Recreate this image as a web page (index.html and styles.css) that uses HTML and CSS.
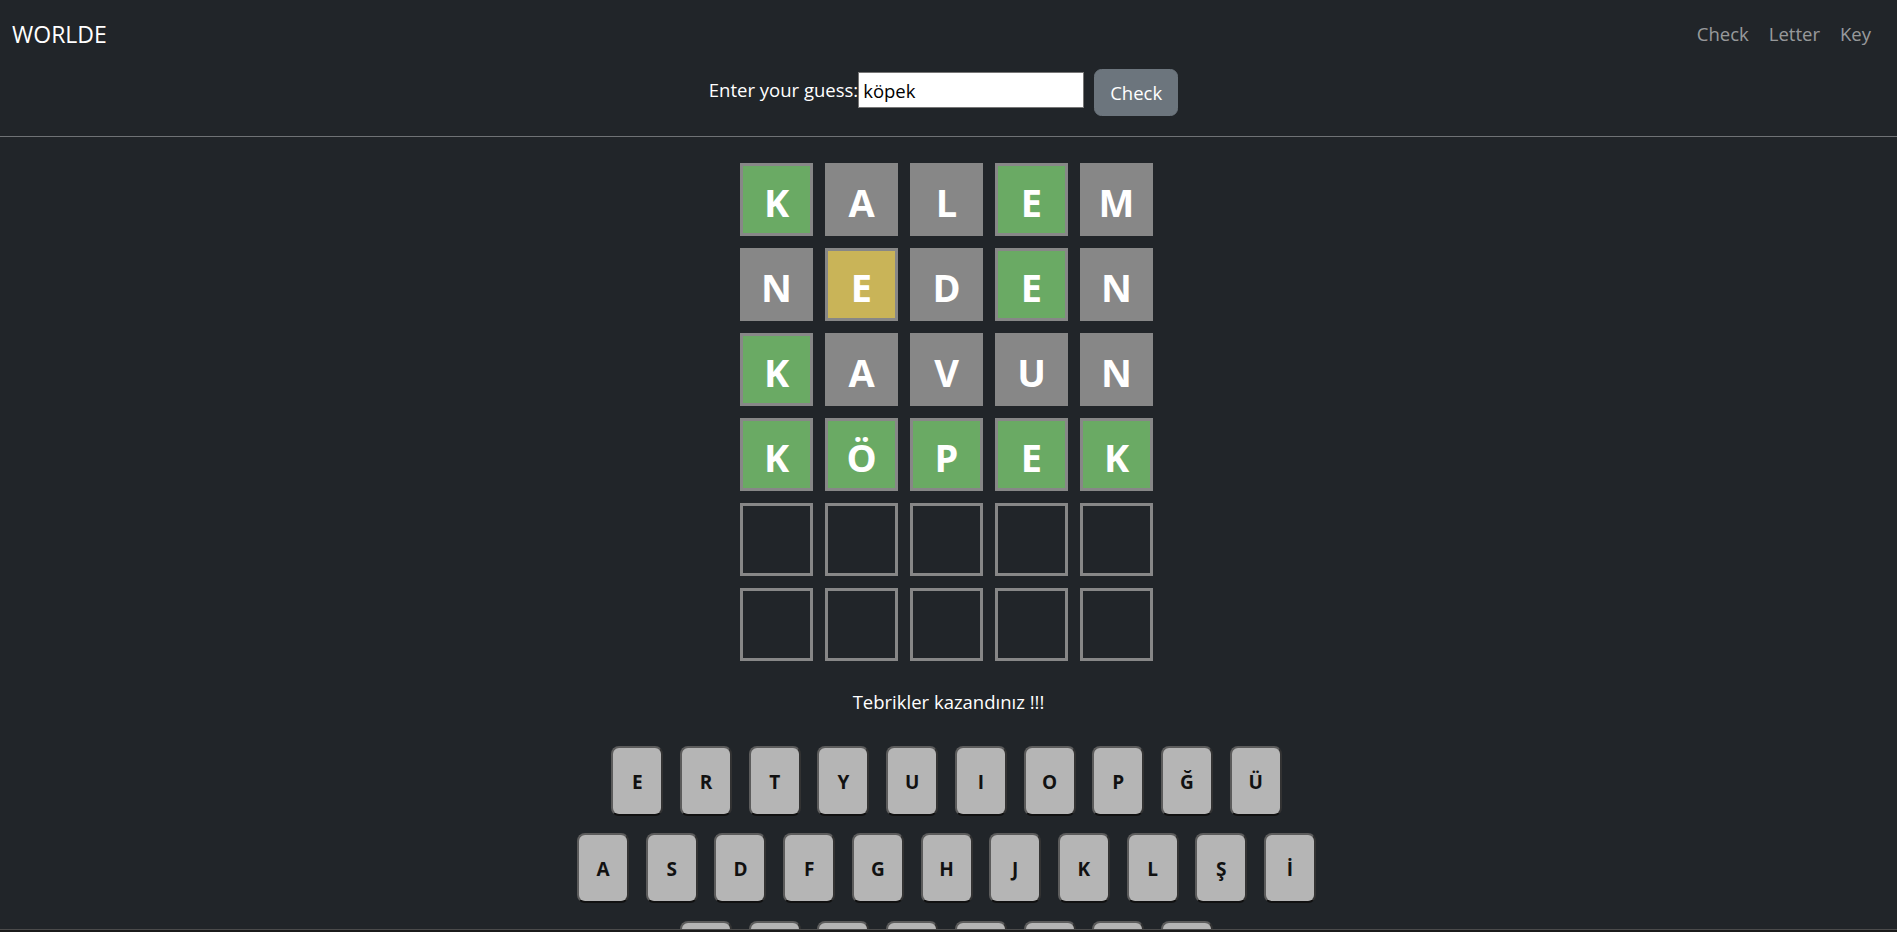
FILE: index.html
```html
<!DOCTYPE html>
<html lang="tr">
<head>
<meta charset="utf-8">
<title>WORLDE</title>
<link rel="stylesheet" href="styles.css">
</head>
<body>
<div class="app">
  <header class="topbar">
    <div class="navrow">
      <a class="brand" href="#">WORLDE</a>
      <nav class="links">
        <a href="#">Check</a>
        <a href="#">Letter</a>
        <a href="#">Key</a>
      </nav>
    </div>
    <form class="guess">
      <label class="guess-label" for="g">Enter your guess:</label><input id="g" class="guess-input" type="text" value="köpek"><button class="btn" type="button">Check</button>
    </form>
  </header>

  <main class="game">
    <div class="board">
      <div class="tile g">K</div><div class="tile x">A</div><div class="tile x">L</div><div class="tile g">E</div><div class="tile x">M</div>
      <div class="tile x">N</div><div class="tile y">E</div><div class="tile x">D</div><div class="tile g">E</div><div class="tile x">N</div>
      <div class="tile g">K</div><div class="tile x">A</div><div class="tile x">V</div><div class="tile x">U</div><div class="tile x">N</div>
      <div class="tile g">K</div><div class="tile g">Ö</div><div class="tile g">P</div><div class="tile g">E</div><div class="tile g">K</div>
      <div class="tile"></div><div class="tile"></div><div class="tile"></div><div class="tile"></div><div class="tile"></div>
      <div class="tile"></div><div class="tile"></div><div class="tile"></div><div class="tile"></div><div class="tile"></div>
    </div>

    <p class="msg">Tebrikler kazandınız !!!</p>

    <div class="keyboard">
      <div class="krow">
        <div class="key">E</div><div class="key">R</div><div class="key">T</div><div class="key">Y</div><div class="key">U</div><div class="key">I</div><div class="key">O</div><div class="key">P</div><div class="key">Ğ</div><div class="key">Ü</div>
      </div>
      <div class="krow">
        <div class="key">A</div><div class="key">S</div><div class="key">D</div><div class="key">F</div><div class="key">G</div><div class="key">H</div><div class="key">J</div><div class="key">K</div><div class="key">L</div><div class="key">Ş</div><div class="key">İ</div>
      </div>
      <div class="krow">
        <div class="key">Z</div><div class="key">C</div><div class="key">V</div><div class="key">B</div><div class="key">N</div><div class="key">M</div><div class="key">Ö</div><div class="key">Ç</div>
      </div>
    </div>
  </main>
  <div class="edge"></div>
</div>
</body>
</html>
```

FILE: styles.css
```css
html, body {
  margin: 0;
  padding: 0;
  background: #212529;
}

.app {
  height: 100vh;
  overflow: hidden;
  background: #212529;
  color: #fff;
  font-family: "Open Sans", "Noto Sans", sans-serif;
  font-size: 18.5px;
  line-height: 1.5;
}

.topbar {
  border-bottom: 1px solid #6f7275;
}

.navrow {
  display: flex;
  justify-content: space-between;
  align-items: center;
  height: 60px;
  box-sizing: border-box;
  padding: 8px 26px 0 12px;
}

.brand {
  font-size: 23px;
  color: #fff;
  text-decoration: none;
}

.links {
  display: flex;
  gap: 20px;
}

.links a {
  color: rgba(255, 255, 255, 0.55);
  text-decoration: none;
}

.guess {
  display: flex;
  justify-content: center;
  align-items: flex-start;
  margin: 9px 0 0 0;
  padding: 0 10px 20px 0;
}

.guess-label {
  margin-top: 7px;
}

.guess-input {
  margin-top: 3px;
  width: 226px;
  height: 36px;
  box-sizing: border-box;
  border: 1px solid #767676;
  padding: 0 4px;
  font-family: "Open Sans", "Noto Sans", sans-serif;
  font-size: 18.5px;
  color: #000;
  background: #fff;
  outline: none;
}

.btn {
  margin-left: 10px;
  height: 47px;
  box-sizing: border-box;
  padding: 7.5px 15px;
  border: 1px solid #6c757d;
  border-radius: 7.5px;
  background: #6c757d;
  color: #fff;
  font-family: "Open Sans", "Noto Sans", sans-serif;
  font-size: 18.5px;
  line-height: 30px;
}

.game {
  display: flex;
  flex-direction: column;
  align-items: center;
  padding: 26px 4px 0 0;
}

.board {
  display: grid;
  grid-template-columns: repeat(5, 73px);
  grid-auto-rows: 73px;
  gap: 12px;
}

.tile {
  box-sizing: border-box;
  border: 3px solid #878787;
  display: flex;
  align-items: center;
  justify-content: center;
  padding-top: 4px;
  font-size: 38px;
  font-weight: 700;
  color: #fff;
  line-height: 1;
}

.tile.g { background: #6aaa64; }
.tile.y { background: #c9b458; }
.tile.x { background: #878787; }

.msg {
  margin: 27px 0 0 0;
  padding-left: 4px;
}

.keyboard {
  margin-top: 30px;
  display: flex;
  flex-direction: column;
  align-items: center;
  gap: 17.4px;
}

.krow {
  display: flex;
  justify-content: center;
  gap: 16.7px;
}

.key {
  width: 52px;
  height: 70px;
  box-sizing: border-box;
  border-radius: 8px;
  border: 2px solid;
  border-color: #5c5c5c #333 #111 #5c5c5c;
  background: #b5b5b5;
  color: #111;
  display: flex;
  align-items: center;
  justify-content: center;
  padding-top: 2px;
  font-size: 19px;
  font-weight: 700;
}

.edge {
  position: fixed;
  left: 0;
  right: 0;
  bottom: 0;
  height: 2px;
  border-top: 1px solid #4b4b4b;
  background: #1b1b1b;
}
```
